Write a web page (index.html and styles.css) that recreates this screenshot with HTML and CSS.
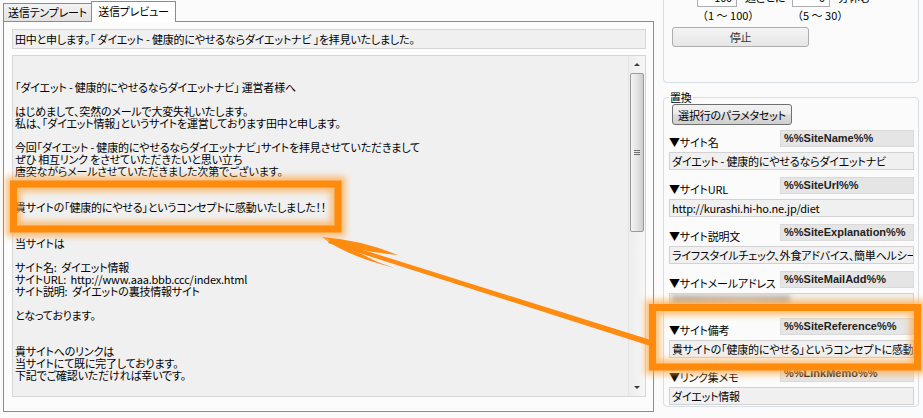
FILE: index.html
```html
<!DOCTYPE html>
<html lang="ja">
<head>
    <meta charset="UTF-8">
    <title>送信プレビュー</title>
    <link rel="stylesheet" href="styles.css">
</head>
<body>
    <div class="window">
        <div class="left">
            <div class="tabs">
                <div class="tab">送信テンプレート</div>
                <div class="tab active">送信プレビュー</div>
            </div>
            <div class="tab-page">
                <div class="subject">田中と申します。「 ダイエット - 健康的にやせるならダイエットナビ 」を拝見いたしました。</div>
                <div class="mail-body">
<div class="mail-text">

「ダイエット - 健康的にやせるならダイエットナビ」 運営者様へ

はじめまして、突然のメールで大変失礼いたします。
私は、「ダイエット情報」というサイトを運営しております田中と申します。

今回「ダイエット - 健康的にやせるならダイエットナビ」サイトを拝見させていただきまして
ぜひ 相互リンク をさせていただきたいと思い立ち
唐突ながらメールさせていただきました次第でございます。


貴サイトの「健康的にやせる」というコンセプトに感動いたしました！！


当サイトは

サイト名:  ダイエット情報
サイトURL:  http://www.aaa.bbb.ccc/index.html
サイト説明:  ダイエットの裏技情報サイト

となっております。


貴サイトへのリンクは
当サイトにて既に完了しております。
下記でご確認いただければ幸いです。</div>
                    <div class="scrollbar">
                        <span class="arrow up"></span>
                        <div class="thumb"><span class="grip"></span></div>
                        <span class="arrow down"></span>
                    </div>
                </div>
            </div>
        </div>

        <div class="right">
            <div class="group send-group">
                <div class="interval-row">
                    <span class="num-box">100</span>
                    <span class="unit">通ごとに</span>
                    <span class="num-box short">0</span>
                    <span class="unit">分休む</span>
                </div>
                <div class="range-row">
                    <span class="range">（1 ～ 100）</span>
                    <span class="range">（5 ～ 30）</span>
                </div>
                <button class="btn btn-stop">停止</button>
            </div>

            <fieldset class="group replace">
                <legend>置換</legend>
                <button class="btn btn-set">選択行のパラメタセット</button>

                <div class="param">
                    <div class="param-head">
                        <span class="param-label">▼サイト名</span>
                        <span class="param-key">%%SiteName%%</span>
                    </div>
                    <div class="param-value">ダイエット - 健康的にやせるならダイエットナビ</div>
                </div>
                <div class="param">
                    <div class="param-head">
                        <span class="param-label">▼サイトURL</span>
                        <span class="param-key">%%SiteUrl%%</span>
                    </div>
                    <div class="param-value">http://kurashi.hi-ho.ne.jp/diet</div>
                </div>
                <div class="param">
                    <div class="param-head">
                        <span class="param-label">▼サイト説明文</span>
                        <span class="param-key">%%SiteExplanation%%</span>
                    </div>
                    <div class="param-value">ライフスタイルチェック、外食アドバイス、簡単ヘルシーレシピ</div>
                </div>
                <div class="param">
                    <div class="param-head">
                        <span class="param-label">▼サイトメールアドレス</span>
                        <span class="param-key">%%SiteMailAdd%%</span>
                    </div>
                    <div class="param-value"><span class="masked"></span></div>
                </div>
                <div class="param">
                    <div class="param-head">
                        <span class="param-label">▼サイト備考</span>
                        <span class="param-key">%%SiteReference%%</span>
                    </div>
                    <div class="param-value">貴サイトの「健康的にやせる」というコンセプトに感動いたしました！！</div>
                </div>
                <div class="param">
                    <div class="param-head">
                        <span class="param-label">▼リンク集メモ</span>
                        <span class="param-key">%%LinkMemo%%</span>
                    </div>
                    <div class="param-value">ダイエット情報</div>
                </div>
            </fieldset>
        </div>
    </div>

    <!-- hand-drawn callout: highlighted sentence and where it comes from -->
    <svg class="marks" width="923" height="418" viewBox="0 0 923 418">
        <defs>
            <filter id="glow" x="-20%" y="-50%" width="140%" height="200%">
                <feGaussianBlur stdDeviation="3"/>
            </filter>
            <filter id="soft" x="-5%" y="-10%" width="110%" height="120%">
                <feGaussianBlur stdDeviation="0.7"/>
            </filter>
        </defs>
        <g fill="none" stroke="#ffa53c" stroke-width="15" opacity="0.7" filter="url(#glow)">
            <rect x="13.5" y="184" width="324.5" height="45"/>
            <rect x="652.5" y="307.5" width="265" height="59.5"/>
        </g>
        <g fill="none" stroke="#ff8b10" stroke-width="7" filter="url(#soft)">
            <rect x="13.5" y="184" width="324.5" height="45"/>
            <rect x="652.5" y="307.5" width="265" height="59.5"/>
        </g>
        <g fill="#ff8b10">
            <path d="M330 239.5 L654 341 L652 346.5 L328 243 Z"/>
            <path d="M322 237 Q362 240 398 255 Q378 253 362 250 L338 244 Z"/>
            <path d="M322 237 Q346 256 395 268 Q375 262 362 254 L338 245 Z"/>
        </g>
    </svg>
</body>
</html>
```

FILE: styles.css
```css
* {
    box-sizing: border-box;
}

body {
    margin: 0;
    width: 923px;
    height: 418px;
    overflow: hidden;
    position: relative;
    background-color: #fbfbfb;
    font-family: "Noto Sans CJK JP", sans-serif;
    font-size: 11px;
    letter-spacing: -0.2px;
    font-feature-settings: "palt";
    color: #000;
}

.window {
    display: flex;
}

/* left side: tab control with the mail preview */

.left {
    width: 654px;
    padding-left: 3px;
}

.tabs {
    display: flex;
    align-items: flex-end;
    height: 21px;
}

.tab {
    width: 89px;
    height: 18px;
    border: 1px solid #898c95;
    border-bottom: none;
    background: linear-gradient(#f3f3f3, #e2e2e2);
    text-align: center;
    line-height: 17px;
    white-space: nowrap;
}

.tab.active {
    position: relative;
    width: 85px;
    height: 21px;
    margin-left: -1px;
    margin-bottom: -1px;
    background: #fff;
    line-height: 18px;
}

.tab-page {
    height: 391px;
    border: 1px solid #898c95;
    background-color: #fcfcfc;
    padding: 7px 7px 0 8px;
}

.subject {
    height: 20px;
    border: 1px solid #d6d6d6;
    background-color: #f0f0f0;
    padding-left: 2px;
    line-height: 18px;
    white-space: nowrap;
    overflow: hidden;
}

.mail-body {
    display: flex;
    height: 342px;
    margin-top: 6px;
    border: 1px solid #d6d6d6;
    background-color: #f0f0f0;
}

.mail-text {
    flex: 1;
    padding: 1px 0 0 2px;
    line-height: 12px;
    white-space: pre;
    overflow: hidden;
}

.scrollbar {
    width: 17px;
    display: flex;
    flex-direction: column;
    align-items: center;
    border-left: 1px solid #e4e4e4;
    background: linear-gradient(to right, #ededed, #f7f7f7);
}

.arrow {
    width: 17px;
    height: 17px;
    display: flex;
    align-items: center;
    justify-content: center;
}

.arrow::after {
    content: "";
    border-left: 3px solid transparent;
    border-right: 3px solid transparent;
}

.arrow.up::after {
    border-bottom: 3px solid #3c3c3c;
}

.arrow.down {
    margin-top: auto;
}

.arrow.down::after {
    border-top: 3px solid #3c3c3c;
}

.thumb {
    width: 14px;
    height: 159px;
    border: 1px solid #9b9b9b;
    border-radius: 2px;
    background: linear-gradient(to right, #f4f4f4, #e2e2e2 55%, #cdcdcd);
    display: flex;
    align-items: center;
    justify-content: center;
}

.grip {
    width: 6px;
    height: 5px;
    border-top: 1px solid #6e6e6e;
    border-bottom: 1px solid #6e6e6e;
    background: linear-gradient(transparent 1px, #6e6e6e 1px, #6e6e6e 2px, transparent 2px);
}

/* right side: sending controls and replacement parameters */

.right {
    width: 256px;
    margin-left: 9px;
}

.group {
    border: 1px solid #d5dfe5;
    border-radius: 4px;
}

.send-group {
    height: 103px;
    margin-top: -20px;
    padding-top: 6px;
}

.interval-row {
    display: flex;
    align-items: center;
    height: 20px;
    padding-left: 33px;
}

.num-box {
    width: 40px;
    height: 20px;
    border: 1px solid #abadb3;
    background-color: #fff;
    padding-right: 4px;
    text-align: right;
    line-height: 18px;
}

.num-box.short {
    width: 38px;
}

.unit {
    width: 55px;
    padding-left: 8px;
    white-space: nowrap;
}

.range-row {
    display: flex;
    margin-top: 2px;
    padding-left: 33px;
    line-height: 12px;
}

.range {
    width: 95px;
    white-space: pre;
    letter-spacing: 0;
    font-feature-settings: normal;
}

.btn {
    display: block;
    height: 20px;
    padding: 0;
    font-family: inherit;
    font-size: 11px;
    letter-spacing: -0.2px;
    font-feature-settings: "palt";
    color: #000;
    border-radius: 3px;
    white-space: nowrap;
}

.btn-stop {
    width: 137px;
    margin: 6px 0 0 8px;
    border: 1px solid #adadad;
    background: linear-gradient(#f4f4f4, #e6e6e6);
    color: #333;
}

.btn-set {
    width: 120px;
    height: 21px;
    margin-left: 3px;
    border: 1px solid #707070;
    background: linear-gradient(#f2f2f2, #ebebeb 50%, #dddddd 50%, #cfcfcf);
}

.replace {
    margin: 7px 0 0;
    padding: 0 4px 1px 5px;
    min-width: 0;
}

.replace legend {
    padding: 0 1px;
    line-height: 14px;
}

.param {
    height: 47px;
}

.param:first-of-type {
    margin-top: 5px;
}

.param:last-child {
    height: auto;
}

.param-head {
    display: flex;
    height: 22px;
}

.param-label {
    margin-top: 5px;
    line-height: 14px;
    white-space: nowrap;
}

.param-key {
    flex-shrink: 0;
    margin-left: auto;
    width: 134px;
    height: 17px;
    border: 1px solid #dadada;
    background-color: #e5e5e5;
    padding-left: 3px;
    font: bold 11px "Liberation Sans", sans-serif;
    letter-spacing: 0;
    line-height: 15px;
    color: #222;
    white-space: nowrap;
    overflow: hidden;
}

.param-value {
    height: 18px;
    border: 1px solid #d2d2d2;
    background-color: #f0f0f0;
    padding-left: 2px;
    line-height: 16px;
    white-space: nowrap;
    overflow: hidden;
}

.masked {
    display: inline-block;
    width: 118px;
    height: 9px;
    margin-top: 1px;
    vertical-align: top;
    background: linear-gradient(to right, #b4b4b4, #c4c4c4 60%, #b8b8b8);
    filter: blur(2.5px);
}

.marks {
    position: absolute;
    top: 0;
    left: 0;
    pointer-events: none;
}
```
